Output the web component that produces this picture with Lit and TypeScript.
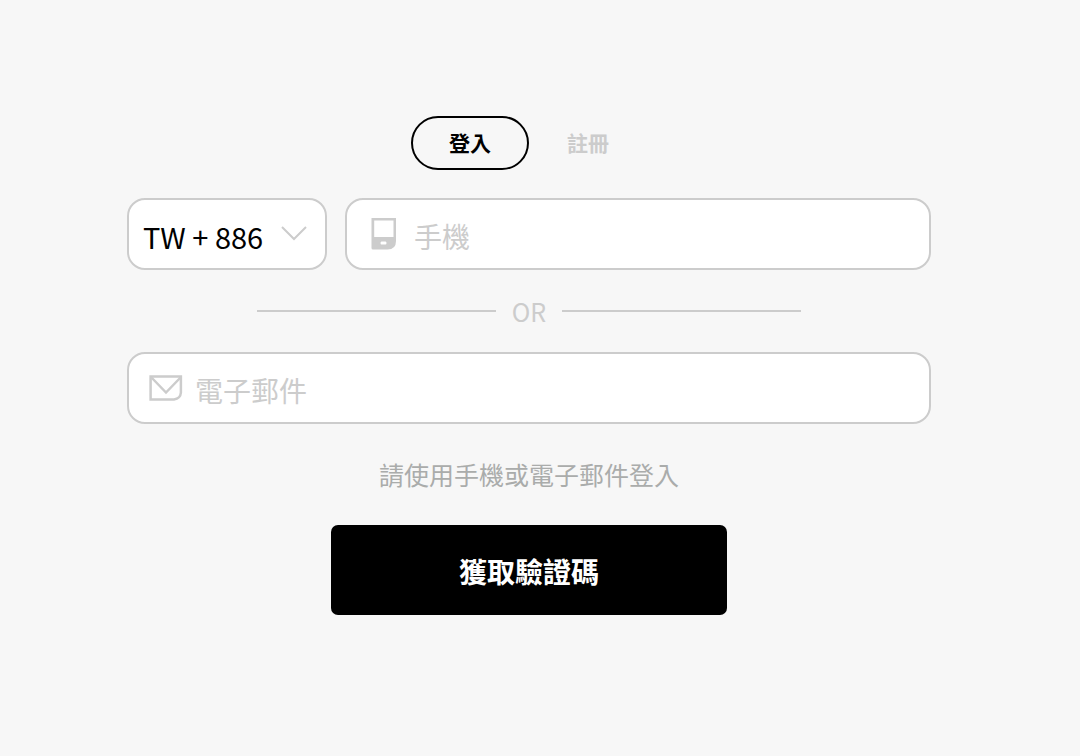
import { LitElement, html, css } from "lit";
import { customElement, state } from "lit/decorators.js";

@customElement("app-root")
export class AppRoot extends LitElement {
  @state() private mode: "login" | "register" = "login";

  static styles = css`
    :host {
      display: block;
      box-sizing: border-box;
      min-height: 100vh;
      padding: 116px 149px 40px 127px;
      background: #f7f7f7;
      color: #000;
      font-family: "Noto Sans CJK TC", "Noto Sans", sans-serif;
    }
    * {
      box-sizing: border-box;
    }
    button,
    input,
    select {
      margin: 0;
      font: inherit;
    }
    .form {
      display: flex;
      flex-direction: column;
    }
    .tabs {
      display: flex;
      justify-content: center;
    }
    .tab {
      min-width: 118px;
      height: 54px;
      padding: 0 16px 2px;
      border: 2px solid transparent;
      border-radius: 27px;
      background: none;
      color: #ccc;
      font-size: 21px;
      font-weight: 700;
      line-height: 32px;
      cursor: pointer;
    }
    .tab.active {
      border-color: #000;
      color: #000;
    }
    .row {
      display: flex;
      gap: 18px;
      margin-top: 28px;
    }
    .box {
      display: flex;
      align-items: center;
      height: 72px;
      border: 2px solid #ccc;
      border-radius: 18px;
      background: #fff;
    }
    .country {
      position: relative;
      flex: 0 0 200px;
    }
    .select {
      width: 100%;
      height: 100%;
      padding: 4px 44px 0 14px;
      border: 0;
      border-radius: 16px;
      background: none;
      color: #000;
      font-size: 29px;
      appearance: none;
      outline: none;
    }
    .chevron {
      position: absolute;
      top: 24px;
      right: 18px;
      pointer-events: none;
    }
    .field {
      padding: 0 20px 0 24px;
      gap: 17px;
    }
    .phone {
      flex: 1;
      min-width: 0;
    }
    .email {
      gap: 12px;
      padding-left: 20px;
    }
    .icon {
      flex: none;
      display: block;
    }
    .input {
      flex: 1;
      min-width: 0;
      height: 100%;
      padding: 4px 0 0;
      border: 0;
      background: none;
      color: #000;
      font-size: 28px;
      outline: none;
    }
    .input::placeholder {
      color: #ccc;
      opacity: 1;
    }
    .divider {
      display: flex;
      align-items: center;
      justify-content: center;
      gap: 16px;
      height: 82px;
      color: #ccc;
      font-size: 25px;
    }
    .divider::before,
    .divider::after {
      content: "";
      flex: 0 1 239px;
      height: 2px;
      background: #ccc;
    }
    .hint {
      margin: 32px 0 33px;
      color: #aaacab;
      font-size: 25px;
      line-height: 36px;
      text-align: center;
    }
    .submit {
      align-self: center;
      width: 396px;
      max-width: 100%;
      height: 90px;
      padding: 2px 0 0;
      border: 0;
      border-radius: 7px;
      background: #000;
      color: #fff;
      font-size: 28px;
      font-weight: 700;
      cursor: pointer;
    }
  `;

  private submit(e: Event) {
    e.preventDefault();
  }

  render() {
    return html`
      <form class="form" @submit=${this.submit}>
        <div class="tabs">
          <button
            type="button"
            class="tab ${this.mode === "login" ? "active" : ""}"
            aria-pressed=${this.mode === "login"}
            @click=${() => (this.mode = "login")}
          >登入</button>
          <button
            type="button"
            class="tab ${this.mode === "register" ? "active" : ""}"
            aria-pressed=${this.mode === "register"}
            @click=${() => (this.mode = "register")}
          >註冊</button>
        </div>
        <div class="row">
          <div class="box country">
            <select class="select" aria-label="TW + 886">
              <option>TW + 886</option>
            </select>
            <svg class="chevron" width="26" height="18" viewBox="0 0 26 18" fill="none" stroke="#ccc" stroke-width="2" aria-hidden="true">
              <path d="M1 3 L13 15 L25 3" />
            </svg>
          </div>
          <label class="box field phone">
            <svg class="icon" width="26" height="34" viewBox="0 0 26 34" aria-hidden="true">
              <path fill="#ccc" fill-rule="evenodd" d="M.5 1H25V24Q25 32.500 16.500 32.500H2Q.5 32.500 .5 31ZM3.200 3.500V20H22.500V3.500ZM10.500 24.500Q9.500 24.500 9.500 26T10.500 27.500H14.500Q15.500 27.500 15.500 26T14.500 24.500Z" />
            </svg>
            <input class="input" type="tel" placeholder="手機" aria-label="手機" />
          </label>
        </div>
        <div class="divider">OR</div>
        <label class="box field email">
          <svg class="icon" width="34" height="26" viewBox="0 0 34 26" fill="none" stroke="#ccc" stroke-width="2.500" aria-hidden="true">
            <path d="M1.600 1.600H31.900V17.500Q31.500 23.500 25 24.400H1.600Z" />
            <path d="M2 2L17 17.500L32 2" />
          </svg>
          <input class="input" type="email" placeholder="電子郵件" aria-label="電子郵件" />
        </label>
        <p class="hint">請使用手機或電子郵件登入</p>
        <button class="submit" type="submit">獲取驗證碼</button>
      </form>
    `;
  }
}
